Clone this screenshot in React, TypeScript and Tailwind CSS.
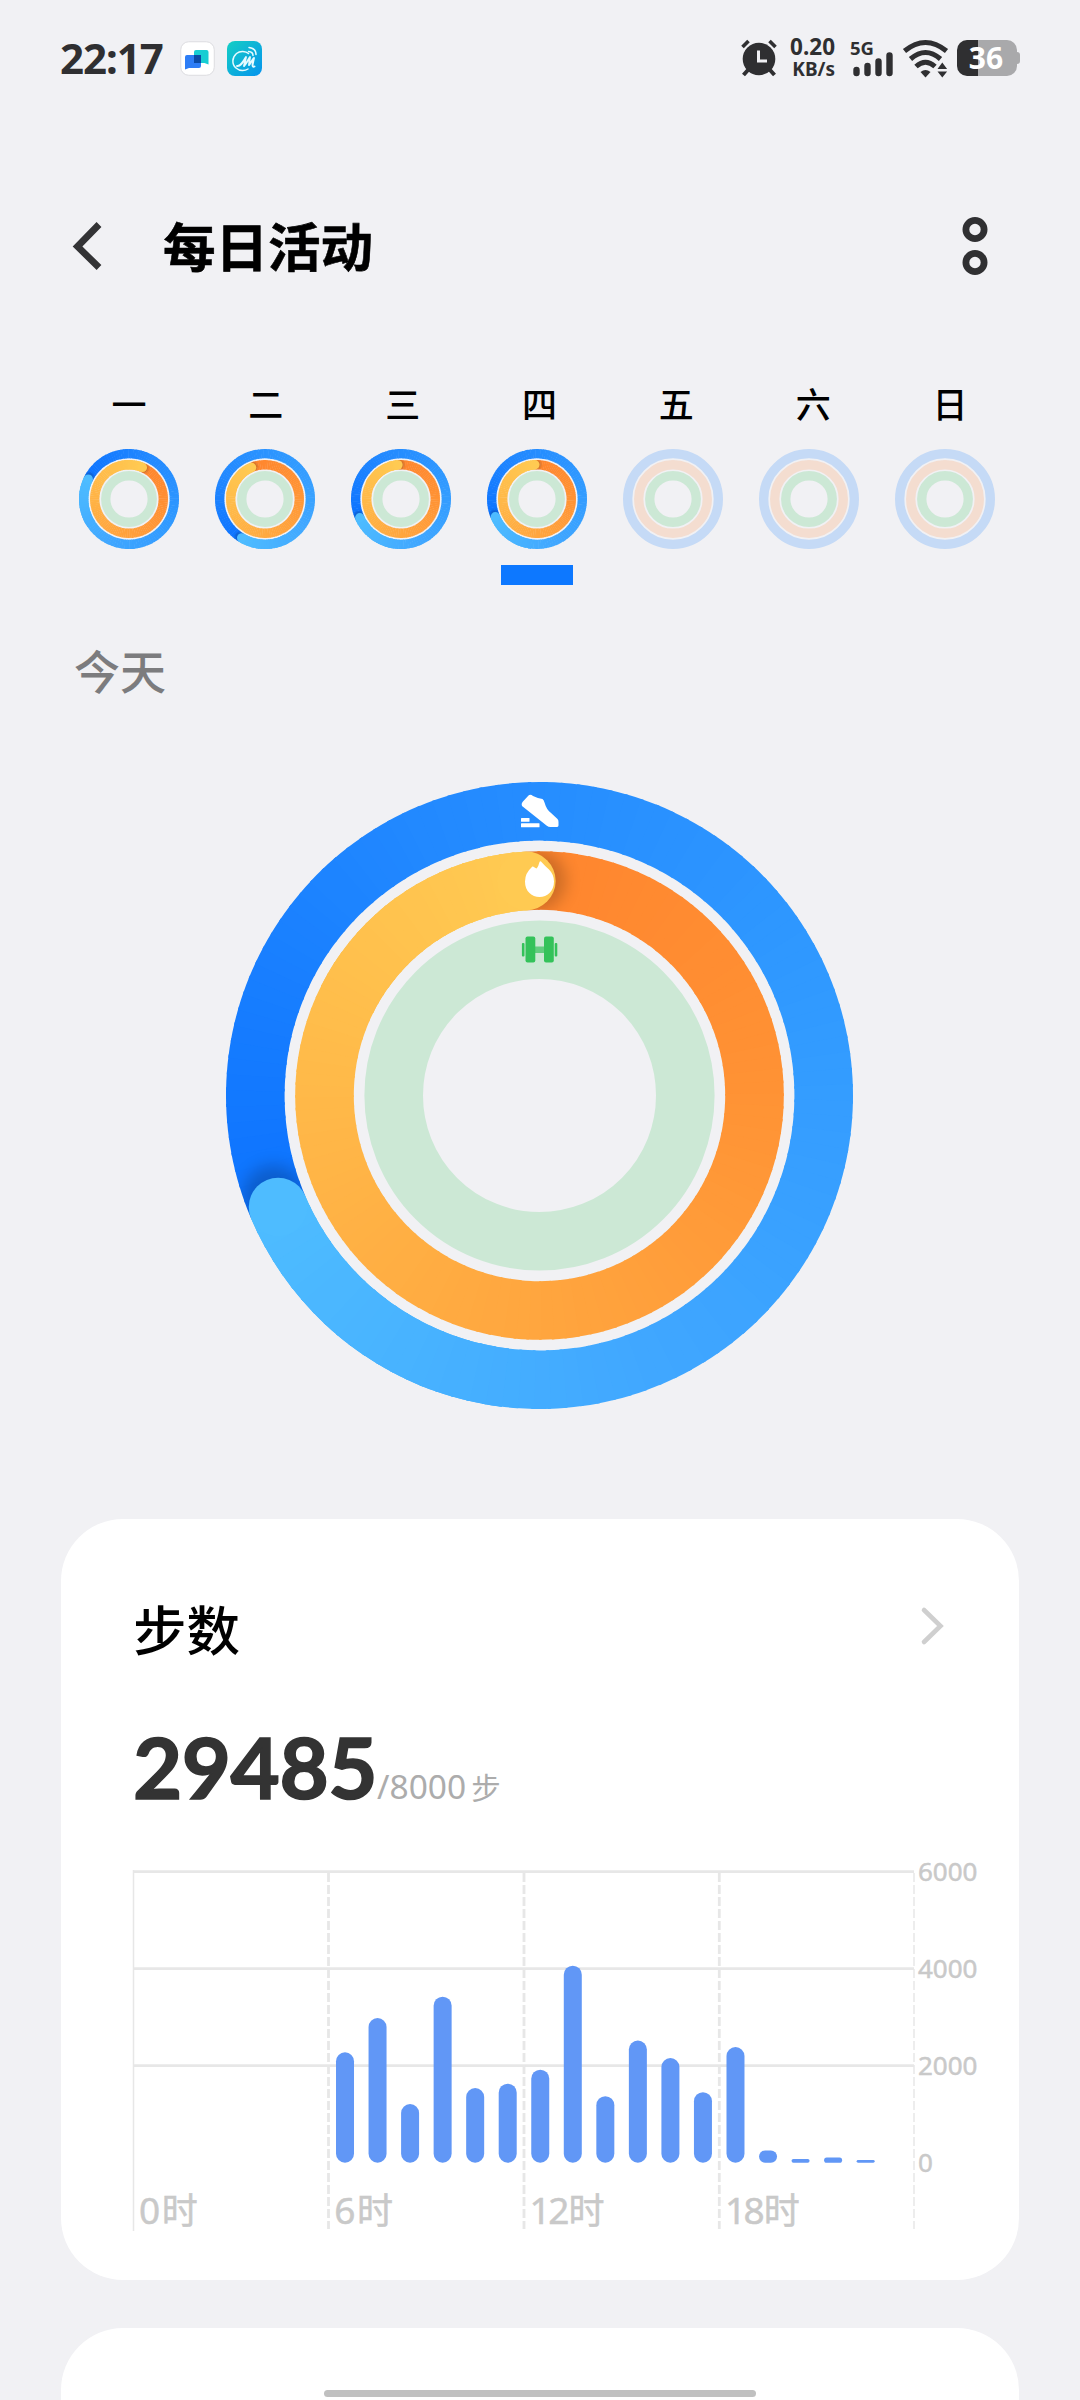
import React from "react";

type RGB = [number, number, number];

const BLUE: RGB[] = [[13, 115, 255], [34, 137, 255], [48, 153, 255], [64, 167, 255], [78, 188, 255]];
const ORANGE: RGB[] = [[255, 133, 46], [255, 146, 52], [255, 165, 62], [255, 184, 72], [255, 202, 82]];

const rgb = (c: RGB) => `rgb(${Math.round(c[0])},${Math.round(c[1])},${Math.round(c[2])})`;

function colorAt(stops: RGB[], t: number): string {
  const p = Math.min(Math.max(t, 0), 1) * (stops.length - 1);
  const i = Math.min(Math.floor(p), stops.length - 2);
  const f = p - i;
  const a = stops[i];
  const b = stops[i + 1];
  return rgb([a[0] + (b[0] - a[0]) * f, a[1] + (b[1] - a[1]) * f, a[2] + (b[2] - a[2]) * f]);
}

// Angles run clockwise in degrees, with 0 at twelve o'clock.
const point = (r: number, deg: number): [number, number] => {
  const a = (deg * Math.PI) / 180;
  return [r * Math.sin(a), -r * Math.cos(a)];
};

function arc(r: number, from: number, to: number): string {
  const [x1, y1] = point(r, from);
  const [x2, y2] = point(r, to);
  return `M${x1.toFixed(3)} ${y1.toFixed(3)}A${r} ${r} 0 0 1 ${x2.toFixed(3)} ${y2.toFixed(3)}`;
}

const WIDTH = 58.6;
const SEGMENTS = 120;

function FullRing({ id, r, end, stops }: { id: string; r: number; end: number; stops: RGB[] }) {
  const step = 360 / SEGMENTS;
  const start = end - 360;
  const segment = (i: number) => (
    <path
      key={i}
      d={arc(r, start + i * step, start + (i + 1) * step + (i < SEGMENTS - 1 ? 0.6 : 0))}
      stroke={colorAt(stops, (i + 0.5) / SEGMENTS)}
      strokeWidth={WIDTH}
      fill="none"
    />
  );
  const all = Array.from({ length: SEGMENTS }, (_, i) => i);
  const [cx, cy] = point(r, end);
  const [sx, sy] = point(r, end + 2.5);
  return (
    <g>
      <defs>
        <mask id={`${id}-mask`} maskUnits="userSpaceOnUse" x="-314" y="-314" width="628" height="628">
          <circle r={r} fill="none" stroke="white" strokeWidth={WIDTH} />
        </mask>
        <filter id={`${id}-blur`} x="-50%" y="-50%" width="200%" height="200%">
          <feGaussianBlur stdDeviation="8" />
        </filter>
      </defs>
      {all.map(segment)}
      <g mask={`url(#${id}-mask)`}>
        <circle cx={sx} cy={sy} r={WIDTH / 2 + 1} fill="#000" opacity="0.2" filter={`url(#${id}-blur)`} />
      </g>
      {all.slice(SEGMENTS - 20).map(segment)}
      <circle cx={cx} cy={cy} r={WIDTH / 2} fill={rgb(stops[stops.length - 1])} />
    </g>
  );
}

type Activity = { steps?: number; calories?: number };

function Rings({ id, className, activity, children }: { id: string; className: string; activity: Activity; children?: React.ReactNode }) {
  return (
    <svg viewBox="-313.5 -313.5 627 627" className={className}>
      {activity.steps !== undefined ? (
        <FullRing id={`${id}-s`} r={284.2} end={activity.steps} stops={BLUE} />
      ) : (
        <circle r="284.2" fill="none" stroke="#c5daf6" strokeWidth={WIDTH} />
      )}
      {activity.calories !== undefined ? (
        <FullRing id={`${id}-c`} r={215} end={activity.calories} stops={ORANGE} />
      ) : (
        <circle r="215" fill="none" stroke="#f4ddd0" strokeWidth={WIDTH} />
      )}
      <circle r="145.8" fill="none" stroke="#cce8d5" strokeWidth={WIDTH} />
      {children}
    </svg>
  );
}

const DAYS: { label: string; activity: Activity }[] = [
  { label: "一", activity: { steps: 296, calories: 383 } },
  { label: "二", activity: { steps: 211, calories: 337 } },
  { label: "三", activity: { steps: 245.5, calories: 355 } },
  { label: "四", activity: { steps: 246.9, calories: 356.5 } },
  { label: "五", activity: {} },
  { label: "六", activity: {} },
  { label: "日", activity: {} },
];

function StatusBar() {
  return (
    <header className="flex h-[116px] shrink-0 items-center pl-[60px] pr-[60px] text-[#2f2f31]">
      <span className="w-[120px] font-['Noto_Sans',sans-serif] text-[42px] font-bold leading-none tracking-[-1px]">22:17</span>
      <svg viewBox="0 0 35 35" className="h-[35px] w-[35px]">
        <rect x="0.75" y="0.75" width="33.5" height="33.5" rx="8" fill="#fff" stroke="#dcdce0" strokeWidth="1" />
        <path d="M16 9h10.500a2 2 0 0 1 2 2v12.500l-4-1.500H14V11a2 2 0 0 1 2-2z" fill="#17cdd3" />
        <path d="M7 14h14v11a2 2 0 0 1-2 2H9l-4 1.500V16a2 2 0 0 1 2-2z" fill="#2d7df6" />
        <path d="M14 14h7v8h-7z" fill="#0a4aa6" />
      </svg>
      <svg viewBox="0 0 35 35" className="ml-3 h-[35px] w-[35px]">
        <defs>
          <linearGradient id="m-app" x1="0" y1="0" x2="1" y2="1">
            <stop offset="0" stopColor="#14cfc4" />
            <stop offset="1" stopColor="#0593ee" />
          </linearGradient>
        </defs>
        <rect width="35" height="35" rx="8" fill="url(#m-app)" />
        <g fill="none" stroke="#e6fbff" strokeLinecap="round" strokeLinejoin="round">
          <path d="M21.500 12.500C19 10 13 9.500 9.500 12.500 5 16.500 4.500 23 9 27c4 3.500 9 3 12 1" strokeWidth="1.500" />
          <path d="M10 25c3 .5 5-2 9-9l-2 9c2-2 4-6 6-9l-1 8c2-2 3-5 5-7l-1.500 7c0 2 1 2 2 1.500" strokeWidth="1.900" />
          <path d="M21.500 10.500c3 .2 4.500 2 4.500 4M22 6.500c4.500.5 7 3 7 7" strokeWidth="1.500" />
        </g>
      </svg>
      <div className="flex-1" />
      <svg viewBox="0 0 38 38" className="h-[38px] w-[38px]">
        <circle cx="19" cy="20" r="16.300" fill="currentColor" />
        <path d="M2.500 8l6-6M35.500 8l-6-6" stroke="currentColor" strokeWidth="3.600" />
        <path d="M8 31l-4.500 5M30 31l4.500 5" stroke="currentColor" strokeWidth="4" />
        <path d="M18.500 11.500V22H27" fill="none" stroke="#f1f1f4" strokeWidth="3" />
      </svg>
      <div className="ml-[10px] flex w-[47px] flex-col items-end font-['Noto_Sans',sans-serif] font-bold">
        <span className="text-[22.500px] leading-[22px]">0.20</span>
        <span className="text-[19px] leading-[22px]">KB/s</span>
      </div>
      <svg viewBox="0 0 44 36" className="ml-[17px] h-[36px] w-[44px] overflow-visible">
        <text x="-2" y="15" fontFamily="Noto Sans, sans-serif" fontWeight="700" fontSize="18.500" fill="currentColor">5G</text>
        <g stroke="currentColor" strokeWidth="6.400" strokeLinecap="round">
          <path d="M4.500 30v3M15.500 26v7M26.500 21.500v11.500M37.500 15.500v17.500" />
        </g>
      </svg>
      <svg viewBox="0 0 44 38" className="ml-2 h-[38px] w-[44px] overflow-visible">
        <g fill="none" stroke="currentColor" strokeWidth="5">
          <path d="M0.500 12Q21.500 -5 42.500 12" />
          <path d="M6.500 20Q21.500 7 36.500 20" />
          <path d="M12 27.500Q21.500 19 31 27.500" />
        </g>
        <path d="M16.500 33q5-4 10 0l-5 5.500z" fill="currentColor" />
        <path d="M33.500 30l4.800-6.500 4.800 6.500zM33.500 32.500l4.800 6 4.800-6z" fill="currentColor" />
      </svg>
      <div className="ml-[9px] flex h-[36px] w-[63px] items-center">
        <div className="flex h-[36px] w-[60px] items-center justify-center rounded-[10px] bg-[linear-gradient(90deg,#2f2f31_0_21px,#a9a9ab_21px)]">
          <span className="pb-px pr-[2px] font-['Noto_Sans',sans-serif] text-[30px] font-bold leading-none text-white">36</span>
        </div>
        <div className="h-3 w-[3px] rounded-r bg-[#a9a9ab]" />
      </div>
    </header>
  );
}

function TitleBar() {
  return (
    <div className="flex h-[260px] shrink-0 items-center pl-[72px] pr-[90px]">
      <svg viewBox="0 0 30 48" className="h-[48px] w-[30px]">
        <path d="M27 2.500L5.500 24.500l21.500 21" fill="none" stroke="#333335" strokeWidth="6.800" />
      </svg>
      <h1 className="ml-[61px] flex-1 pb-[3px] text-[52.500px] font-bold leading-none text-black [-webkit-text-stroke:0.6px_black]">每日活动</h1>
      <svg viewBox="0 0 30 60" className="h-[60px] w-[30px]">
        <g fill="none" stroke="#303032" strokeWidth="6.800">
          <circle cx="15" cy="13.500" r="9.100" />
          <circle cx="15" cy="46.500" r="9.100" />
        </g>
      </svg>
    </div>
  );
}

function WeekStrip() {
  return (
    <section className="flex h-[209px] shrink-0 flex-col">
      <div className="ml-[60.500px] grid h-[73px] w-[958px] shrink-0 grid-cols-7 pt-[9px]">
        {DAYS.map((d) => (
          <span key={d.label} className="text-center text-[35px] font-medium leading-[36px] text-black">
            {d.label}
          </span>
        ))}
      </div>
      <div className="ml-[61px] grid w-[952px] grid-cols-7">
        {DAYS.map((d, i) => (
          <div key={d.label} className="flex flex-col items-center">
            <Rings id={`day${i}`} className="h-[100px] w-[100px]" activity={d.activity} />
            {i === 3 && <div className="mt-4 h-5 w-[72px] bg-[#0d78ff]" />}
          </div>
        ))}
      </div>
    </section>
  );
}

function TodayRings() {
  return (
    <section className="flex h-[934px] shrink-0 flex-col">
      <h2 className="mt-[61px] pl-[74px] text-[46px] font-medium leading-[46px] text-[#7c7c7e]">今天</h2>
      <Rings id="today" className="ml-[226px] mt-[90px] h-[627px] w-[627px]" activity={{ steps: 246.9, calories: 356.5 }}>
        <g fill="#fff">
          <path d="M-17.500 -289.500q-1-2 .5-4l6-6.500q2-1.500 4.500.5 5 2.500 9.500 3 1.500 1 2 3.500 2 7 6 10l7 6.500q1 1 1 3v3.500q0 1.500-2 1.500h-6q-2 0-4-1.500z" />
          <rect x="-18.500" y="-277.500" width="8.500" height="3.800" rx="0.500" />
          <rect x="-18.500" y="-272.200" width="18.500" height="4" rx="0.500" />
          <path d="M0 -233.500q-1 4-2.500 6-.5.800-1.500 0l-2.500-1.500q-1-.3-1.300.8-6.700 6-6.700 14.200 0 7.500 4.500 11.500 4 4 10 4t10-4q4.500-4.500 4.500-11.500 0-7-5-12-4.500-4-8-8-1-.8-1.500.5z" />
        </g>
        <g fill="#34c25a">
          <rect x="-14" y="-159" width="9.800" height="26" rx="2" />
          <rect x="4.500" y="-159" width="9.800" height="26" rx="2" />
          <rect x="-17.600" y="-152.500" width="2.600" height="13.500" rx="1" />
          <rect x="15.200" y="-152.500" width="2.600" height="13.500" rx="1" />
          <rect x="-4.500" y="-149" width="9" height="6.500" opacity="0.7" />
        </g>
      </Rings>
    </section>
  );
}

const LEFT = 0.5;
const SLOT = 32.54;
const BASE = 293.7;
const HOURLY: [number, number][] = [
  [6, 110.4], [7, 144.7], [8, 58.7], [9, 166], [10, 74.7], [11, 79], [12, 93], [13, 197], [14, 66.5],
  [15, 122.2], [16, 104.7], [17, 70.5], [18, 115.7], [19, 12.3], [20, 3.7], [21, 5.1], [22, 2.7],
];

function StepsChart() {
  return (
    <svg viewBox="0 0 860 370" className="h-[370px] w-[860px] overflow-visible">
      <g stroke="#e7e7e7">
        <path d={`M${LEFT} 1V362`} strokeWidth="1.500" />
        {[2.6, 99.6, 196.6].map((y) => (
          <path key={y} d={`M0 ${y}H781`} strokeWidth="2.600" />
        ))}
        {[195.5, 391, 586.3].map((x) => (
          <path key={x} d={`M${x} 4V360`} strokeWidth="2.800" strokeDasharray="9 3" />
        ))}
        <path d="M781 4V360" strokeWidth="1.500" strokeDasharray="9 3" />
      </g>
      {HOURLY.map(([h, v]) => (
        <rect key={h} x={LEFT + (h + 0.5) * SLOT - 9} y={BASE - v} width="18" height={v} rx={Math.min(9, v / 2)} fill="#6197f6" />
      ))}
      <g fill="#c9c9c9" stroke="#c9c9c9" strokeWidth="0.5" fontFamily="Noto Sans, sans-serif" fontSize="26">
        {["6000", "4000", "2000", "0"].map((t, i) => (
          <text key={t} x="785" y={11.500 + i * 97}>{t}</text>
        ))}
      </g>
      <g fill="#c9c9c9" stroke="#c9c9c9" strokeWidth="0.5" fontFamily="Noto Sans, sans-serif" fontSize="37">
        {["0", "6", "12", "18"].map((t, i) => (
          <text key={t} x={6 + i * 195.3} y="354.500" letterSpacing={t.length > 1 ? -2.5 : 0}>
            {t}
            <tspan dx="1.500" fontFamily="Noto Sans CJK SC, sans-serif" fontSize="36" letterSpacing="0">时</tspan>
          </text>
        ))}
      </g>
    </svg>
  );
}

function StepsCard() {
  return (
    <section className="mx-[61px] flex h-[761px] shrink-0 flex-col rounded-[62px] bg-white pl-[72px] pr-[72px]">
      <div className="flex items-center justify-between pt-[82px]">
        <h3 className="text-[53.500px] font-medium leading-[54px] text-black">步数</h3>
        <svg viewBox="0 0 24 40" className="mr-[3px] mt-[-4px] h-[40px] w-[24px]">
          <path d="M4 4l16.500 16L4 36" fill="none" stroke="#cfcfcf" strokeWidth="4.600" strokeLinecap="round" />
        </svg>
      </div>
      <div className="mt-[56px] flex h-[104px] items-baseline font-['Noto_Sans',sans-serif]">
        <span className="font-['Lato',sans-serif] text-[85px] font-bold leading-[110px] tracking-[-0.5px] text-[#333] [-webkit-text-stroke:1.6px_#333]">29485</span>
        <span className="text-[33.500px] text-[#acacac]">/8000</span>
        <span className="ml-[5px] font-['Noto_Sans_CJK_SC',sans-serif] text-[29.500px] text-[#acacac]">步</span>
      </div>
      <div className="mt-[54px]">
        <StepsChart />
      </div>
    </section>
  );
}

export default function App() {
  return (
    <main className="relative flex h-[2400px] w-[1080px] flex-col overflow-hidden bg-[#f1f1f4] font-['Noto_Sans_CJK_SC',sans-serif]">
      <StatusBar />
      <TitleBar />
      <WeekStrip />
      <TodayRings />
      <StepsCard />
      <section className="mx-[61px] mt-12 h-[180px] shrink-0 rounded-[62px] bg-white" />
      <div className="absolute bottom-[3px] left-[324px] h-[7px] w-[432px] rounded-full bg-[#c0c0c0]" />
    </main>
  );
}
